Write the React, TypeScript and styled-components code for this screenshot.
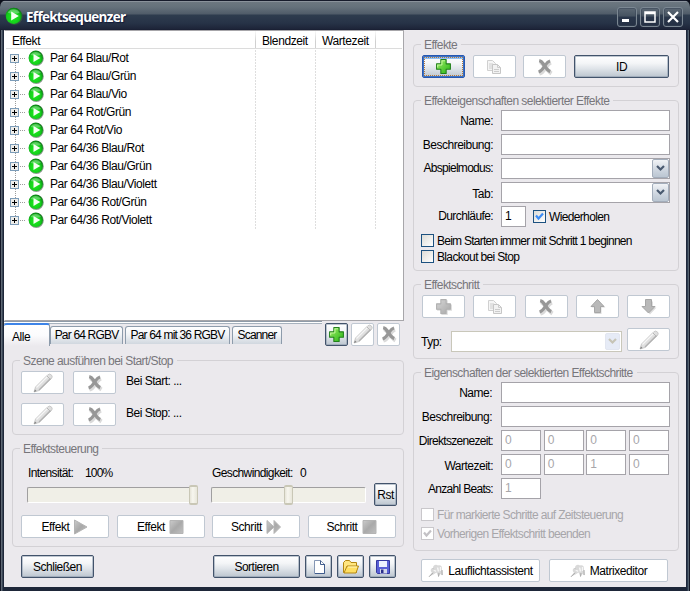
import React from "react";
import styled, { createGlobalStyle, css } from "styled-components";

const Global = createGlobalStyle`
  *, *::before, *::after { box-sizing: border-box; }
  body { margin: 0; background: #0c0f1a; overflow: hidden; }
  svg { display: block; flex: none; }
`;

const Frame = styled.div`
  width: 690px;
  height: 591px;
  display: flex;
  flex-direction: column;
  border-radius: 7px 7px 0 0;
  overflow: hidden;
  background: linear-gradient(90deg, #141827 0 1px, #5e6874 1px 2px, #3a4656 2px 3px, #1e2739 3px 687px, #2c3b50 687px 688px, #56636f 688px 689px, #141827 689px);
  font: 12px/14px "Liberation Sans", Arial, sans-serif;
  letter-spacing: -0.5px;
  color: #000;
  white-space: nowrap;
`;

const TitleBar = styled.header`
  height: 30px;
  flex: none;
  display: flex;
  align-items: center;
  padding: 2px 7px 0 5px;
  background: linear-gradient(#161b2b 0 1px, #8a929b 1px 2px, #6c7780 2px, #65717b 7px, #505c69 14px, #2e3c4e 15px, #273347 23px, #1d2438 29px, #181d30 30px);
`;

const Title = styled.h1`
  margin: 2px auto 0 3px;
  font: bold 13.500px/20px "Open Sans", sans-serif;
  letter-spacing: -0.7px;
  color: #fff;
  text-shadow: 1px 1px 1px #10193a;
`;

const CaptionButton = styled.button`
  width: 20px;
  height: 20px;
  margin: 1px 0 0 3px;
  padding: 0;
  display: flex;
  align-items: center;
  justify-content: center;
  border: 1px solid #7b8792;
  border-radius: 3px;
  background: linear-gradient(#5c6874, #465361 45%, #29364a 50%, #253044);
  box-shadow: inset 0 0 0 1px #35425380;
`;

const Client = styled.main`
  width: 682px;
  height: 557px;
  margin-left: 4px;
  display: flex;
  background: #ebe9ed;
`;

const Left = styled.section`
  width: 400px;
  display: flex;
  flex-direction: column;
`;

const Right = styled.section`
  width: 266px;
  margin-left: 9px;
  padding-top: 14px;
  display: flex;
  flex-direction: column;
`;

const TreeList = styled.div`
  height: 291px;
  flex: none;
  border: 1px solid #a7a6aa;
  border-left-color: #fff;
  background: #fff;
  padding-right: 1px;
`;

const TreeHeader = styled.div`
  height: 18px;
  display: grid;
  grid-template-columns: 250px 60px 60px 1fr;
  margin-left: 1px;
  letter-spacing: -0.4px;
  border-bottom: 1px solid #dcdcdc;
`;

const HeaderCell = styled.div`
  padding: 3px 0 0 6px;
  border-style: solid;
  border-width: 0 1px 0 0;
  border-image: linear-gradient(#fff, #d0d0d0 60%, #d0d0d0) 1;
  &:last-child { border: 0; }
`;

const TreeBody = styled.div`
  height: 180px;
  margin-left: 1px;
  background:
    repeating-linear-gradient(#fff 0 1px, transparent 1px 3px),
    linear-gradient(90deg, transparent 249px, #dedede 249px 250px, transparent 250px 309px, #dedede 309px 310px, transparent 310px 369px, #dedede 369px 370px, transparent 370px);
`;

const TreeRow = styled.div`
  height: 18px;
  display: flex;
  align-items: center;
  padding-left: 4px;
`;

const TreeLabel = styled.span`
  margin-left: 6px;
  letter-spacing: -0.42px;
`;

const TabBar = styled.div`
  height: 26px;
  display: flex;
  flex: none;
`;

const TabStrip = styled.div`
  width: 318px;
  height: 25px;
  display: flex;
  align-items: flex-start;
  gap: 2px;
  border-top: 1px solid #8f9ba8;
  padding-top: 1px;
  background: linear-gradient(#fff 0 1px, #a7b2be 1px 2px, transparent 2px);
`;

const Tab = styled.div<{ $w: number; $active?: boolean }>`
  width: ${(p) => p.$w}px;
  height: 18px;
  margin-top: 3px;
  padding-top: 1px;
  text-align: center;
  letter-spacing: -0.82px;
  border: 1px solid #8d9bab;
  border-bottom: 0;
  border-radius: 3px 3px 0 0;
  background: linear-gradient(#fff, #f1f3f6 45%, #d0d7df);
  ${(p) =>
    p.$active &&
    css`
      height: 23px;
      margin: 0 -2px 0 0;
      padding: 5px 0 0 8px;
      text-align: left;
      letter-spacing: -0.42px;
      border-left: 0;
      border-top: 2px solid #3d84e8;
      background: linear-gradient(#fff, #fbfbfd 50%, #ebe9ed);
    `}
`;

const Button = styled.button<{ $w: number; $off?: boolean; $focus?: boolean; $gap?: number }>`
  width: ${(p) => p.$w}px;
  height: 23px;
  flex: none;
  margin: 0;
  padding: 0;
  display: flex;
  align-items: center;
  justify-content: center;
  gap: ${(p) => p.$gap ?? 4}px;
  font: inherit;
  letter-spacing: inherit;
  color: #000;
  border: 1px solid #42536b;
  border-radius: 2px;
  background: linear-gradient(#fff, #f3f5f7 35%, #dfe4e9 60%, #bcc5cf);
  box-shadow: inset 0 0 0 1px #8796a888;
  ${(p) =>
    p.$off &&
    css`
      letter-spacing: -0.42px;
      border-color: #c0c8d2;
      background: #fff;
      box-shadow: none;
    `}
  ${(p) =>
    p.$focus &&
    css`
      border-color: #2858b0;
      box-shadow: inset 0 0 0 1px #3c72c4, inset 0 2px 0 1px #8fc0f4;
      outline: 1px dotted #b87838;
      outline-offset: -3px;
    `}
`;

const Row = styled.div<{ $gap?: number; $mt?: number; $ml?: number }>`
  display: flex;
  align-items: center;
  flex: none;
  gap: ${(p) => p.$gap ?? 0}px;
  margin-top: ${(p) => p.$mt ?? 0}px;
  margin-left: ${(p) => p.$ml ?? 0}px;
`;

const Group = styled.section<{ $h: number; $mt?: number; $left?: boolean; $fields?: boolean }>`
  position: relative;
  flex: none;
  height: ${(p) => p.$h}px;
  margin-top: ${(p) => p.$mt ?? 0}px;
  margin-left: ${(p) => (p.$left ? 8 : 0)}px;
  padding: ${(p) => (p.$fields ? 9 : 10)}px 0 0 8px;
  border: 1px solid #d3d1d5;
  border-radius: 4px;
`;

const Legend = styled.h2`
  position: absolute;
  left: 7px;
  top: -7px;
  margin: 0;
  padding: 0 4px 0 3px;
  font: inherit;
  letter-spacing: -0.56px;
  color: #77767b;
  background: #ebe9ed;
`;

const ButtonText = styled.span`
  margin: -4px 0 0 1px;
`;

const SliderLabels = styled.div`
  display: grid;
  grid-template-columns: 57px 127px 88px 1fr;
  margin: 7px 0 0 7px;
  letter-spacing: -0.62px;
`;

const Percent = styled.span`
  letter-spacing: -0.8px;
`;

const Track = styled.div<{ $w: number }>`
  width: ${(p) => p.$w}px;
  height: 16px;
  border: 1px solid #fff;
  border-top-color: #a09fa0;
  border-left-color: #a09fa0;
  border-radius: 2px;
  background: #f0efe7;
`;

const Thumb = styled.div<{ $x: number }>`
  width: 9px;
  height: 20px;
  margin: -3px 0 0 ${(p) => p.$x}px;
  border: 1px solid #c9c7b6;
  border-width: 2px 1px;
  border-radius: 2px;
  background: linear-gradient(90deg, #e6e4d8, #f7f6ef 40%, #e8e6da);
`;

const Fields = styled.div`
  display: grid;
  grid-template-columns: 72px 169px;
  column-gap: 8px;
  row-gap: 3px;
  justify-content: end;
  margin-right: 8px;
`;

const FieldLabel = styled.label<{ $dy?: number; $dx?: number; $ls?: number }>`
  justify-self: end;
  padding: ${(p) => 4 + (p.$dy ?? 0)}px ${(p) => p.$dx ?? 0}px 0 0;
  height: 21px;
  letter-spacing: ${(p) => p.$ls ?? -0.5}px;
`;

const Field = styled.div<{ $w?: number; $off?: boolean }>`
  width: ${(p) => p.$w ?? 169}px;
  height: 21px;
  flex: none;
  border: 1px solid #a5a3a9;
  background: #fff;
  padding: 2px 0 0 3px;
  color: ${(p) => (p.$off ? "#a7a6aa" : "#000")};
`;

const Combo = styled.div<{ $w: number; $off?: boolean }>`
  width: ${(p) => p.$w}px;
  height: 21px;
  display: flex;
  justify-content: flex-end;
  margin-top: ${(p) => (p.$off ? 4 : 0)}px;
  padding: ${(p) => (p.$off ? "1px" : "0")};
  border: 1px solid ${(p) => (p.$off ? "#c9c7ba" : "#a5a3a9")};
  background: #fff;
`;

const ComboArrow = styled.span<{ $off?: boolean }>`
  width: ${(p) => (p.$off ? 15 : 17)}px;
  height: ${(p) => (p.$off ? 17 : 19)}px;
  display: flex;
  align-items: center;
  justify-content: center;
  border: 1px solid ${(p) => (p.$off ? "#e2e6f0" : "#a3adbb")};
  border-radius: 2px;
  background: ${(p) => (p.$off ? "#e6ebf6" : "linear-gradient(#f1f3f6, #cdd5df 60%, #bbc6d2)")};
  color: ${(p) => (p.$off ? "#c6c4b6" : "#4a5a70")};
`;

const TypeLabel = styled.span`
  width: 29px;
  margin: 4px 0 0 -1px;
`;

const Box = styled.span<{ $off?: boolean }>`
  width: 13px;
  height: 13px;
  flex: none;
  border: 1px solid ${(p) => (p.$off ? "#c9c7cb" : "#1c5180")};
  background: ${(p) => (p.$off ? "#fff" : "linear-gradient(135deg, #dcdcd7, #fff)")};
`;

const CheckLabel = styled.label<{ $off?: boolean; $mt?: number; $ls?: number }>`
  display: flex;
  align-items: center;
  gap: 3px;
  height: 13px;
  margin-top: ${(p) => p.$mt ?? 0}px;
  margin-left: -1px;
  letter-spacing: ${(p) => p.$ls ?? -0.65}px;
  color: ${(p) => (p.$off ? "#a7a6aa" : "#000")};
`;

const PlayBall = ({ size = 16 }: { size?: number }) => (
  <svg width={size} height={size} viewBox="0 0 16 16">
    <defs>
      <radialGradient id="ball" cx="0.45" cy="0.6" r="0.6">
        <stop offset="0" stopColor="#1bf01b" />
        <stop offset="0.65" stopColor="#14cc1c" />
        <stop offset="1" stopColor="#0b7a14" />
      </radialGradient>
    </defs>
    <circle cx="8.3" cy="8.4" r="7.5" fill="#3f5a44" opacity="0.6" />
    <circle cx="7.8" cy="7.8" r="7.2" fill="url(#ball)" />
    <path d="M2.500 5a6 6 0 0 1 10.500 0C10 6 6 6 2.500 5z" fill="#fff" opacity="0.3" />
    <path d="M5.500 3.900v8.200l6.800-4.100z" fill="#f6fff4" />
  </svg>
);

const Expander = ({ first, last }: { first: boolean; last: boolean }) => (
  <svg width="18" height="18" shapeRendering="crispEdges">
    {!first && <path d="M5.500 0v5" stroke="#9c9c9c" strokeDasharray="1 1" />}
    {!last && <path d="M5.500 14v4" stroke="#9c9c9c" strokeDasharray="1 1" />}
    <path d="M10 9.500h5" stroke="#9c9c9c" strokeDasharray="1 1" />
    <rect x="0.500" y="5.500" width="8" height="8" rx="1" fill="#eeedea" stroke="#7c9cb8" />
    <path d="M2 9.500h5M4.500 7v5" stroke="#000" />
  </svg>
);

const Plus = ({ off }: { off?: boolean }) => (
  <svg width="17" height="17" viewBox="0 0 16 16">
    <defs>
      <linearGradient id={off ? "pg" : "pc"} x1="0" y1="0" x2="1" y2="1">
        <stop offset="0" stopColor={off ? "#d6d6d6" : "#a0ee68"} />
        <stop offset="1" stopColor={off ? "#a8a8a8" : "#26b414"} />
      </linearGradient>
    </defs>
    {off && <path d="M6 2h6v4h4v6h-4v4H6v-4H2V6h4z" fill="#dedede" />}
    <path d="M5.500 1.500h5v4h4v5h-4v4h-5v-4h-4v-5h4z" fill={`url(#${off ? "pg" : "pc"})`} stroke={off ? "#b0b0b0" : "#23811c"} strokeLinejoin="round" />
    {!off && <path d="M6.500 6.500v-4h3M2.500 9V6.500h4" fill="none" stroke="#c2f79a" />}
  </svg>
);

const Cross = () => (
  <svg width="18" height="18" viewBox="0 0 18 18">
    <path d="M4 4c3 1 4 4 6 6s3 4 5.500 5.500M15 4.500c-3 1-4 3.500-5.500 5.500s-3 5-6 5.500" stroke="#dadada" strokeWidth="4" fill="none" />
    <path d="M3.200 2.600c3 .6 3.600 3.200 5.300 5.200s2.500 4.600 5.700 5.800" stroke="#979797" strokeWidth="3.400" fill="none" />
    <path d="M14 3c-2.800.6-3.800 2.800-5.200 4.800S5.800 13 2.600 14" stroke="#979797" strokeWidth="3" fill="none" />
  </svg>
);

const Copy = () => (
  <svg width="16" height="16" viewBox="0 0 16 16">
    <path d="M1.500 1.500h5l3 3v7h-8z" fill="#f5f5f5" stroke="#d0d0d0" />
    <path d="M3 5h4M3 7h3M3 9h3" stroke="#cecece" />
    <path d="M6.500 5.500h5l3 3v6h-8z" fill="#f2f2f2" stroke="#c6c6c6" />
    <path d="M11.500 5.500v3h3M8 10.500h5M8 12.500h5" fill="none" stroke="#cccccc" />
  </svg>
);

const Pencil = () => (
  <svg width="20" height="20" viewBox="0 0 20 20">
    <path d="M1 19l1.500-5L14.500 2q2.200-2 4 0 1.500 1.800 0 3.500L6 17.500z" fill="#dfdfdf" stroke="#c2c2c2" strokeWidth="0.800" />
    <path d="M3.500 14.500L15 3" stroke="#f6f6f6" strokeWidth="1.300" />
    <path d="M6 17L17.500 5.500" stroke="#b2b2b2" strokeWidth="1.200" />
    <path d="M14 3l3.500 3.500" stroke="#b8b8b8" />
    <path d="M1 19l1-2.600L3.600 18z" fill="#808080" />
  </svg>
);

const Arrow = ({ down }: { down?: boolean }) => (
  <svg width="17" height="17" viewBox="0 0 17 17">
    <path d={down ? "M10 16.500l6.500-7h-3.500v-6H7v6H3.500z" : "M9.500 2.500l7 7h-4v6.500h-7v-6.500h-3z"} fill="#dcdcdc" />
    <path d={down ? "M8.500 15L2 8.500h3.500v-7h6v7H15z" : "M8.500 1.500L15 8.500h-3.500v6h-6v-6H2z"} fill="#b9b9b9" stroke="#a6a6a6" strokeLinejoin="round" />
  </svg>
);

const MediaGlyph = ({ kind }: { kind: "play" | "stop" | "next" }) => (
  <svg width="15" height="16" viewBox="0 0 15 16">
    <defs>
      <linearGradient id={`m-${kind}`} x1="0" y1="0" x2="1" y2="1">
        <stop offset="0" stopColor="#cbcbcb" />
        <stop offset="0.500" stopColor="#a9a9a9" />
        <stop offset="1" stopColor="#c0c0c0" />
      </linearGradient>
    </defs>
    <path
      d={kind === "play" ? "M1.500 1L14 8 1.500 15z" : kind === "stop" ? "M1 1.500h13v13H1z" : "M1 1.500L8 8 1 14.500zM8 1.500L14.500 8 8 14.500z"}
      fill={`url(#m-${kind})`}
      stroke="#b4b4b4"
      strokeLinejoin="round"
    />
  </svg>
);

const NewFile = () => (
  <svg width="16" height="16" viewBox="0 0 16 16">
    <path d="M3.500 1.500h6l4 4v9h-10z" fill="#fff" stroke="#8496b4" />
    <path d="M9.500 1.500v4h4M13.500 5v9.500H4" fill="none" stroke="#405c8c" />
  </svg>
);

const Folder = () => (
  <svg width="18" height="16" viewBox="0 0 18 16">
    <path d="M1.500 13.500v-10l2-2h4l1.500 2h5.500v10z" fill="#ffe680" stroke="#b38612" strokeLinejoin="round" />
    <path d="M2 14l3-7h11.500l-2.500 7z" fill="#ffdf62" stroke="#b38612" strokeLinejoin="round" />
    <path d="M6 8h9" stroke="#fff7c2" />
  </svg>
);

const Disk = () => (
  <svg width="16" height="16" viewBox="0 0 16 16">
    <path d="M1.500 1.500h13v13h-12l-1-1z" fill="#5960d6" stroke="#3438a0" />
    <path d="M4 2h8v6H4z" fill="#edf2ff" />
    <path d="M5 10h7v4.500H5z" fill="#d5d8ea" />
    <path d="M6 10.500h2.500V14H6z" fill="#2a2e8a" />
  </svg>
);

const Puff = () => (
  <svg width="15" height="15" viewBox="0 0 15 15">
    <path d="M.8 13.800L4 9.500C2 8 2.500 5 5 5c0-3.500 3.500-4 5-2.500 2.500-1 4.500 1 4 3.500l.3 6.500-2-1.500-1.800 3-2-4.500-3 2z" fill="#d9d9d9" />
    <path d="M5.500 6.500l2.500 2M9.500 4.500l1 4M12.500 4v4" stroke="#f6f6f6" strokeWidth="1.400" />
    <path d="M1 13.800l4-4M10.500 13.500l.5-3.500M5 5.500l1 1M14 7l.2 5" stroke="#a8a8a8" />
  </svg>
);

const Chevron = () => (
  <svg width="9" height="7" viewBox="0 0 9 7">
    <path d="M1 1l3.500 3.500L8 1" fill="none" stroke="currentColor" strokeWidth="2.200" />
  </svg>
);

const Check = ({ label, on, off, mt, ls }: { label: string; on?: boolean; off?: boolean; mt?: number; ls?: number }) => (
  <CheckLabel $off={off} $mt={mt} $ls={ls}>
    <Box $off={off}>
      {on && (
        <svg width="11" height="11" viewBox="0 0 11 11">
          <path d="M2 4.500l2.500 3L9 2.500" fill="none" stroke={off ? "#c3c1c5" : "#3d8df5"} strokeWidth="2.200" />
        </svg>
      )}
    </Box>
    <span>{label}</span>
  </CheckLabel>
);

const effects = ["Par 64 Blau/Rot", "Par 64 Blau/Grün", "Par 64 Blau/Vio", "Par 64 Rot/Grün", "Par 64 Rot/Vio", "Par 64/36 Blau/Rot", "Par 64/36 Blau/Grün", "Par 64/36 Blau/Violett", "Par 64/36 Rot/Grün", "Par 64/36 Rot/Violett"];

const TimeFields = ({ values }: { values: string[] }) => (
  <Row $gap={2.67}>
    {values.map((v, i) => (
      <Field key={i} $w={40} $off>{v}</Field>
    ))}
  </Row>
);

export default function App() {
  return (
    <>
      <Global />
      <Frame>
        <TitleBar>
          <PlayBall size={18} />
          <Title>Effektsequenzer</Title>
          <CaptionButton><svg width="12" height="12"><path d="M1 9.500h7" stroke="#fff" strokeWidth="3" /></svg></CaptionButton>
          <CaptionButton><svg width="12" height="12"><path d="M1 1h10v10H1zM1 2.500h10" fill="none" stroke="#fff" strokeWidth="1.500" /></svg></CaptionButton>
          <CaptionButton><svg width="12" height="12"><path d="M1 1l10 10M11 1L1 11" stroke="#fff" strokeWidth="2.200" /></svg></CaptionButton>
        </TitleBar>
        <Client>
          <Left>
            <TreeList>
              <TreeHeader>
                <HeaderCell>Effekt</HeaderCell>
                <HeaderCell>Blendzeit</HeaderCell>
                <HeaderCell>Wartezeit</HeaderCell>
                <HeaderCell />
              </TreeHeader>
              <TreeBody>
                {effects.map((name, i) => (
                  <TreeRow key={name}>
                    <Expander first={i === 0} last={i === effects.length - 1} />
                    <PlayBall />
                    <TreeLabel>{name}</TreeLabel>
                  </TreeRow>
                ))}
              </TreeBody>
            </TreeList>
            <TabBar>
              <TabStrip>
                <Tab $w={46} $active>Alle</Tab>
                <Tab $w={73}>Par 64 RGBV</Tab>
                <Tab $w={105}>Par 64 mit 36 RGBV</Tab>
                <Tab $w={50}>Scanner</Tab>
              </TabStrip>
              <Row $gap={3} $ml={3}>
                <Button $w={23}><Plus /></Button>
                <Button $w={23} $off><Pencil /></Button>
                <Button $w={23} $off><Cross /></Button>
              </Row>
            </TabBar>
            <Group $h={75} $mt={13} $left>
              <Legend>Szene ausführen bei Start/Stop</Legend>
              <Row $gap={9}>
                <Button $w={43} $off><Pencil /></Button>
                <Button $w={43} $off><Cross /></Button>
                <ButtonText>Bei Start: ...</ButtonText>
              </Row>
              <Row $gap={9} $mt={9}>
                <Button $w={43} $off><Pencil /></Button>
                <Button $w={43} $off><Cross /></Button>
                <ButtonText>Bei Stop: ...</ButtonText>
              </Row>
            </Group>
            <Group $h={99} $mt={13} $left>
              <Legend>Effektsteuerung</Legend>
              <SliderLabels>
                <span>Intensität:</span>
                <Percent>100%</Percent>
                <span>Geschwindigkeit:</span>
                <span>0</span>
              </SliderLabels>
              <Row $mt={3} $ml={6} $gap={8}>
                <Row $gap={13}>
                  <Track $w={171}><Thumb $x={161} /></Track>
                  <Track $w={155}><Thumb $x={72} /></Track>
                </Row>
                <Button $w={23}>Rst</Button>
              </Row>
              <Row $mt={9} $gap={7.5}>
                <Button $w={88} $off>Effekt<MediaGlyph kind="play" /></Button>
                <Button $w={88} $off>Effekt<MediaGlyph kind="stop" /></Button>
                <Button $w={88} $off>Schritt<MediaGlyph kind="next" /></Button>
                <Button $w={88} $off>Schritt<MediaGlyph kind="stop" /></Button>
              </Row>
            </Group>
            <Row $mt={8} $ml={17} $gap={5}>
              <Button $w={73}>Schließen</Button>
              <Row $ml={114} $gap={5}>
                <Button $w={87}>Sortieren</Button>
                <Button $w={27}><NewFile /></Button>
                <Button $w={27}><Folder /></Button>
                <Button $w={27}><Disk /></Button>
              </Row>
            </Row>
          </Left>
          <Right>
            <Group $h={43}>
              <Legend>Effekte</Legend>
              <Row $gap={7.7}>
                <Button $w={43} $focus><Plus /></Button>
                <Button $w={43} $off><Copy /></Button>
                <Button $w={43} $off><Cross /></Button>
                <Button $w={95}>ID</Button>
              </Row>
            </Group>
            <Group $h={171} $mt={13} $fields>
              <Legend>Effekteigenschaften selektierter Effekte</Legend>
              <Fields>
                <FieldLabel>Name:</FieldLabel>
                <Field />
                <FieldLabel>Beschreibung:</FieldLabel>
                <Field />
                <FieldLabel $dy={-1} $ls={-0.7}>Abspielmodus:</FieldLabel>
                <Combo $w={169}><ComboArrow><Chevron /></ComboArrow></Combo>
                <FieldLabel $dy={1}>Tab:</FieldLabel>
                <Combo $w={169}><ComboArrow><Chevron /></ComboArrow></Combo>
                <FieldLabel $dy={-1} $ls={-0.6}>Durchläufe:</FieldLabel>
                <Row $gap={8}>
                  <Field $w={25}>1</Field>
                  <Check on label="Wiederholen" />
                </Row>
              </Fields>
              <Check mt={7} ls={-0.75} label="Beim Starten immer mit Schritt 1 beginnen" />
              <Check mt={3} label="Blackout bei Stop" />
            </Group>
            <Group $h={75} $mt={13}>
              <Legend>Effektschritt</Legend>
              <Row $gap={8.25}>
                <Button $w={43} $off><Plus off /></Button>
                <Button $w={43} $off><Copy /></Button>
                <Button $w={43} $off><Cross /></Button>
                <Button $w={43} $off><Arrow /></Button>
                <Button $w={43} $off><Arrow down /></Button>
              </Row>
              <Row $mt={9}>
                <TypeLabel>Typ:</TypeLabel>
                <Row $ml={1} $gap={5}>
                  <Combo $w={171} $off><ComboArrow $off><Chevron /></ComboArrow></Combo>
                  <Button $w={43} $off><Pencil /></Button>
                </Row>
              </Row>
            </Group>
            <Group $h={179} $mt={13} $fields>
              <Legend>Eigenschaften der selektierten Effektschritte</Legend>
              <Fields>
                <FieldLabel $dx={1}>Name:</FieldLabel>
                <Field />
                <FieldLabel $dx={1}>Beschreibung:</FieldLabel>
                <Field />
                <FieldLabel $ls={-0.7}>Direktszenezeit:</FieldLabel>
                <TimeFields values={["0", "0", "0", "0"]} />
                <FieldLabel $dy={1}>Wartezeit:</FieldLabel>
                <TimeFields values={["0", "0", "1", "0"]} />
                <FieldLabel $ls={-0.7}>Anzahl Beats:</FieldLabel>
                <Field $w={40} $off>1</Field>
              </Fields>
              <Check mt={9} off label="Für markierte Schritte auf Zeitsteuerung" />
              <Check mt={6} off label="Vorherigen Effektschritt beenden" on />
            </Group>
            <Row $mt={8} $ml={8} $gap={9}>
              <Button $w={119} $off $gap={5}><Puff />Lauflichtassistent</Button>
              <Button $w={119} $off $gap={5}><Puff />Matrixeditor</Button>
            </Row>
          </Right>
        </Client>
      </Frame>
    </>
  );
}
